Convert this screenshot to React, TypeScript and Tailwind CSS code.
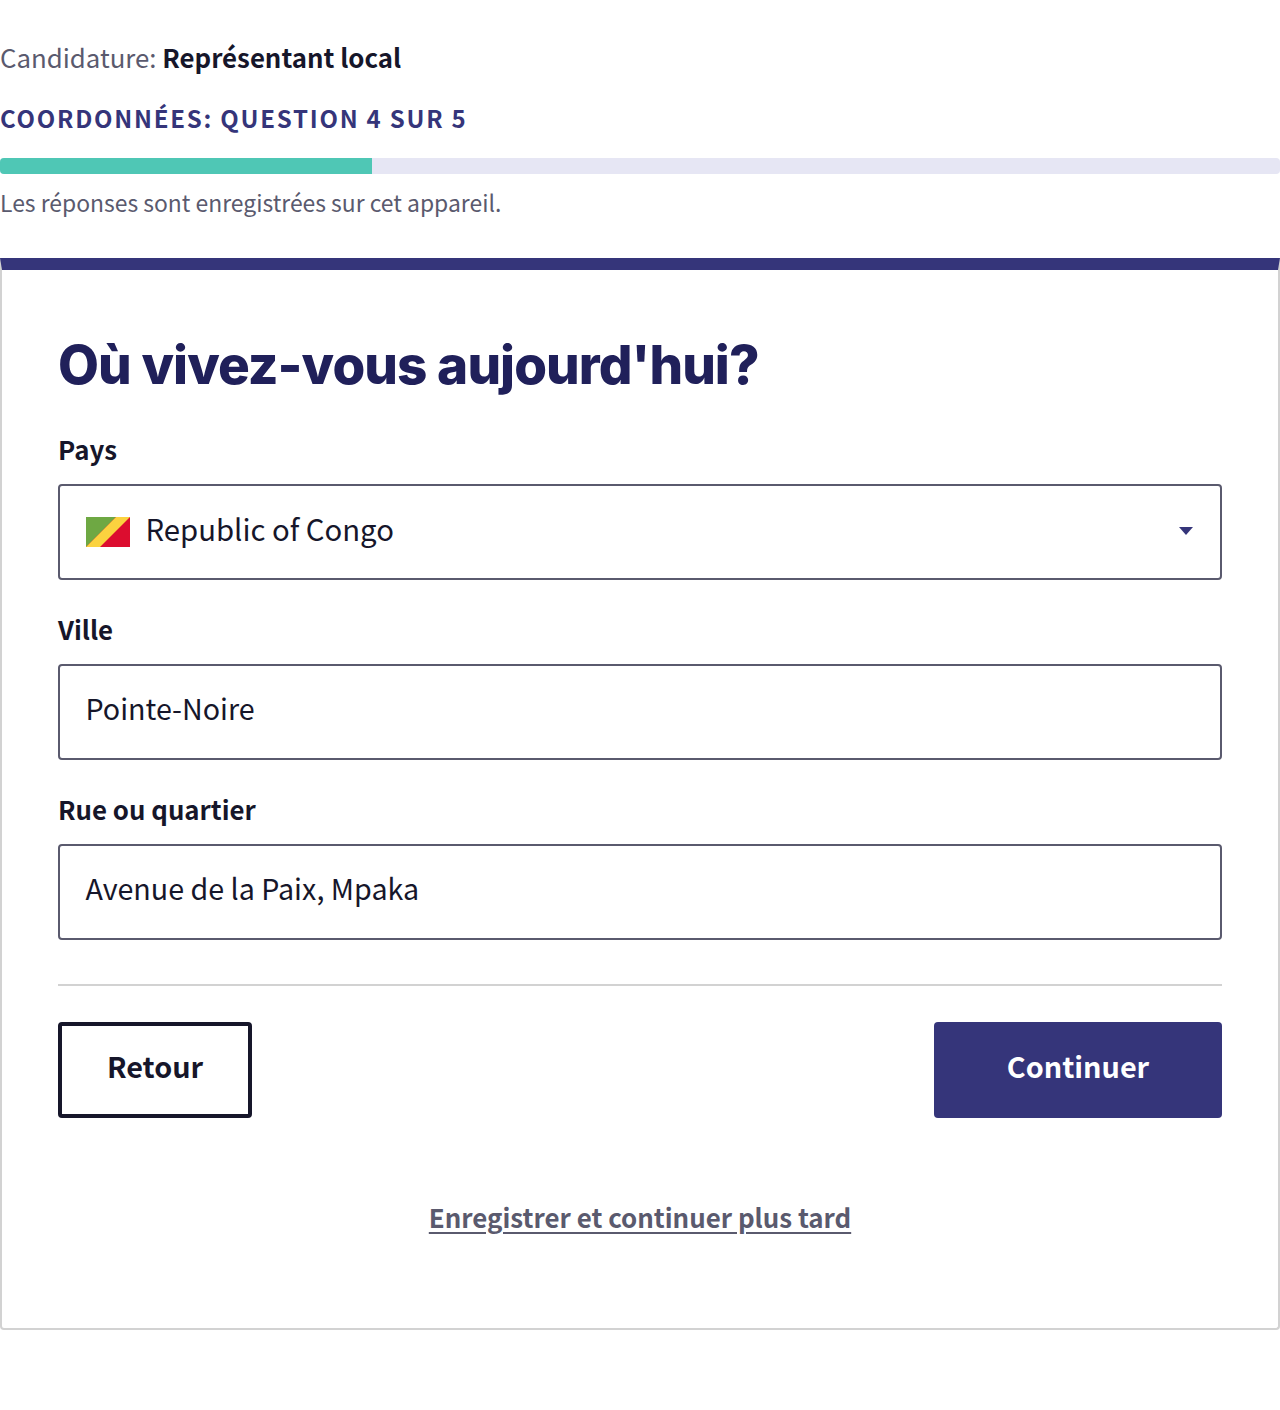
const sans = "font-['Noto_Sans_CJK_SC','Source_Sans_Pro',sans-serif]";

function Flag() {
  return (
    <svg width="44" height="30" viewBox="0 0 44 30" className="mt-[8px] shrink-0">
      <rect width="44" height="30" fill="#dc0d2f" />
      <polygon points="0,0 30,0 0,30" fill="#6ea843" />
      <polygon points="30,0 44,0 14,30 0,30" fill="#fbd33f" />
    </svg>
  );
}

function Label({ children }: { children: React.ReactNode }) {
  return <div className="h-[36px] text-[25.8px] leading-[34px] font-semibold text-[#16162a]">{children}</div>;
}

function Field({ children }: { children: React.ReactNode }) {
  return (
    <div className="mt-[16px] flex h-[96px] items-center rounded-[4px] border-2 border-[#5a5a6e] bg-white pl-[25.5px] pr-[26px] pb-[8px] text-[28.65px] leading-[40px] text-[#16162a]">
      {children}
    </div>
  );
}

export default function App() {
  return (
    <div className={`${sans} h-[1410px] w-[1280px] overflow-hidden bg-white`}>
      <div className="pt-[39px] text-[25.8px] leading-[36px] text-[#5a5a6e]">
        Candidature: <span className="font-bold text-[#16162a]">Représentant local</span>
      </div>
      <div className="mt-[25px] text-[24px] leading-[36px] font-bold tracking-[1.76px] text-[#35357a] whitespace-nowrap">
        COORDONNÉES: QUESTION 4 SUR 5
      </div>
      <div className="mt-[22px] h-[16px] w-full overflow-hidden rounded-[4px] bg-[#e6e6f4]">
        <div className="h-full w-[372px] bg-[#4fc7b5]" />
      </div>
      <div className="mt-[10px] text-[22.9px] leading-[36px] text-[#5a5a6e]">
        Les réponses sont enregistrées sur cet appareil.
      </div>
      <div className="mt-[38px] h-[1072px] rounded-b-[4px] border-x-2 border-b-2 border-t-[12px] border-x-[#d2d2d2] border-b-[#d2d2d2] border-t-[#35357a] px-[56px] pt-[59px]">
        <h1 className="font-['Inter',sans-serif] text-[53px] leading-[72px] font-[850] tracking-[-0.93px] text-[#20205a] whitespace-nowrap">
          Où vivez-vous aujourd'hui?
        </h1>
        <div className="mt-[31px]">
          <Label>Pays</Label>
          <Field>
            <Flag />
            <span className="ml-[16px] text-[29.3px]">Republic of Congo</span>
            <svg width="16" height="10" viewBox="0 0 16 10" className="ml-auto mt-[5px]">
              <polygon points="1,1 15,1 8,9" fill="#35357a" />
            </svg>
          </Field>
        </div>
        <div className="mt-[32px]">
          <Label>Ville</Label>
          <Field>Pointe-Noire</Field>
        </div>
        <div className="mt-[32px]">
          <Label>Rue ou quartier</Label>
          <Field>Avenue de la Paix, Mpaka</Field>
        </div>
        <div className="mt-[44px] h-[2px] bg-[#d2d2d2]" />
        <div className="mt-[36px] flex justify-between">
          <button className="flex h-[96px] w-[194px] items-center justify-center rounded-[4px] border-4 border-[#16162a] bg-white pb-[8px] text-[28.8px] leading-[40px] font-bold text-[#16162a]">
            Retour
          </button>
          <button className="flex h-[96px] w-[288px] items-center justify-center rounded-[4px] bg-[#35357a] pb-[8px] text-[28.8px] leading-[40px] font-bold text-white">
            Continuer
          </button>
        </div>
        <div className="mt-[79px] text-center">
          <a className="text-[25.9px] leading-[40px] font-bold text-[#5a5a6e] underline underline-offset-[4px]">
            Enregistrer et continuer plus tard
          </a>
        </div>
      </div>
    </div>
  );
}
